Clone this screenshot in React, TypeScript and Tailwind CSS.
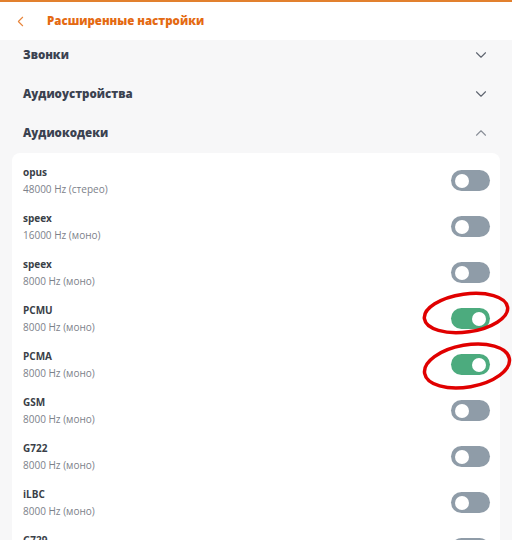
import { ChevronDown, ChevronUp, ChevronLeft } from 'lucide-react'

const codecs = [
  { name: 'opus', rate: '48000 Hz (стерео)', on: false },
  { name: 'speex', rate: '16000 Hz (моно)', on: false },
  { name: 'speex', rate: '8000 Hz (моно)', on: false },
  { name: 'PCMU', rate: '8000 Hz (моно)', on: true },
  { name: 'PCMA', rate: '8000 Hz (моно)', on: true },
  { name: 'GSM', rate: '8000 Hz (моно)', on: false },
  { name: 'G722', rate: '8000 Hz (моно)', on: false },
  { name: 'iLBC', rate: '8000 Hz (моно)', on: false },
  { name: 'G729', rate: '8000 Hz (моно)', on: false },
]

function Toggle({ on }: { on: boolean }) {
  return (
    <div
      className={`flex h-[21px] w-[39px] items-center rounded-full px-[4px] ${
        on ? 'justify-end bg-[#4cab7e]' : 'justify-start bg-[#8f9ca8]'
      }`}
    >
      <div className="h-[14px] w-[14px] rounded-full bg-white" />
    </div>
  )
}

export default function App() {
  return (
    <div className="relative h-[540px] w-[512px] overflow-hidden bg-[#f7f7f8] font-['Open_Sans',sans-serif]">
      {/* Header */}
      <header className="flex h-10 items-center border-t-2 border-[#e2802e] bg-white">
        <ChevronLeft className="ml-[12px] h-[17px] w-[17px] text-[#e8843a]" strokeWidth={1.5} />
        <h1 className="ml-[18px] text-[11.5px] font-extrabold text-[#e46a12]">Расширенные настройки</h1>
      </header>

      {/* Sections */}
      <div className="flex flex-col gap-[21px] pt-[6px]">
        {['Звонки', 'Аудиоустройства', 'Аудиокодеки'].map((s, i) => (
          <div key={s} className="flex h-[18px] items-center justify-between pl-[23px] pr-[22px]">
            <span className="text-[11.5px] font-extrabold text-[#3b4250]">{s}</span>
            {i === 2 ? (
              <ChevronUp className="h-[18px] w-[18px] text-[#8a8f98]" strokeWidth={1.5} />
            ) : (
              <ChevronDown className="h-[18px] w-[18px] text-[#5f6570]" strokeWidth={1.5} />
            )}
          </div>
        ))}
      </div>

      {/* Codec card */}
      <div className="mx-3 mt-[11px] flex flex-col gap-[15px] rounded-lg bg-white pl-[11px] pr-[10px] pt-[12px]">
        {codecs.map((c, i) => (
          <div key={i} className="flex items-center justify-between">
            <div className="flex flex-col gap-[3px]">
              <span className="text-[10px] font-bold leading-[14px] text-[#3a3f48]">{c.name}</span>
              <span className="text-[10px] leading-[14px] text-[#7c818a]">{c.rate}</span>
            </div>
            <Toggle on={c.on} />
          </div>
        ))}
      </div>

      {/* Red annotation ellipses */}
      <svg className="pointer-events-none absolute left-0 top-0" width="512" height="540">
        <ellipse cx="466" cy="313" rx="42" ry="19" fill="none" stroke="#e00000" strokeWidth="3.5" transform="rotate(-8 466 313)" />
        <ellipse cx="467" cy="366" rx="43" ry="21" fill="none" stroke="#e00000" strokeWidth="3.5" transform="rotate(-10 467 366)" />
      </svg>
    </div>
  )
}
